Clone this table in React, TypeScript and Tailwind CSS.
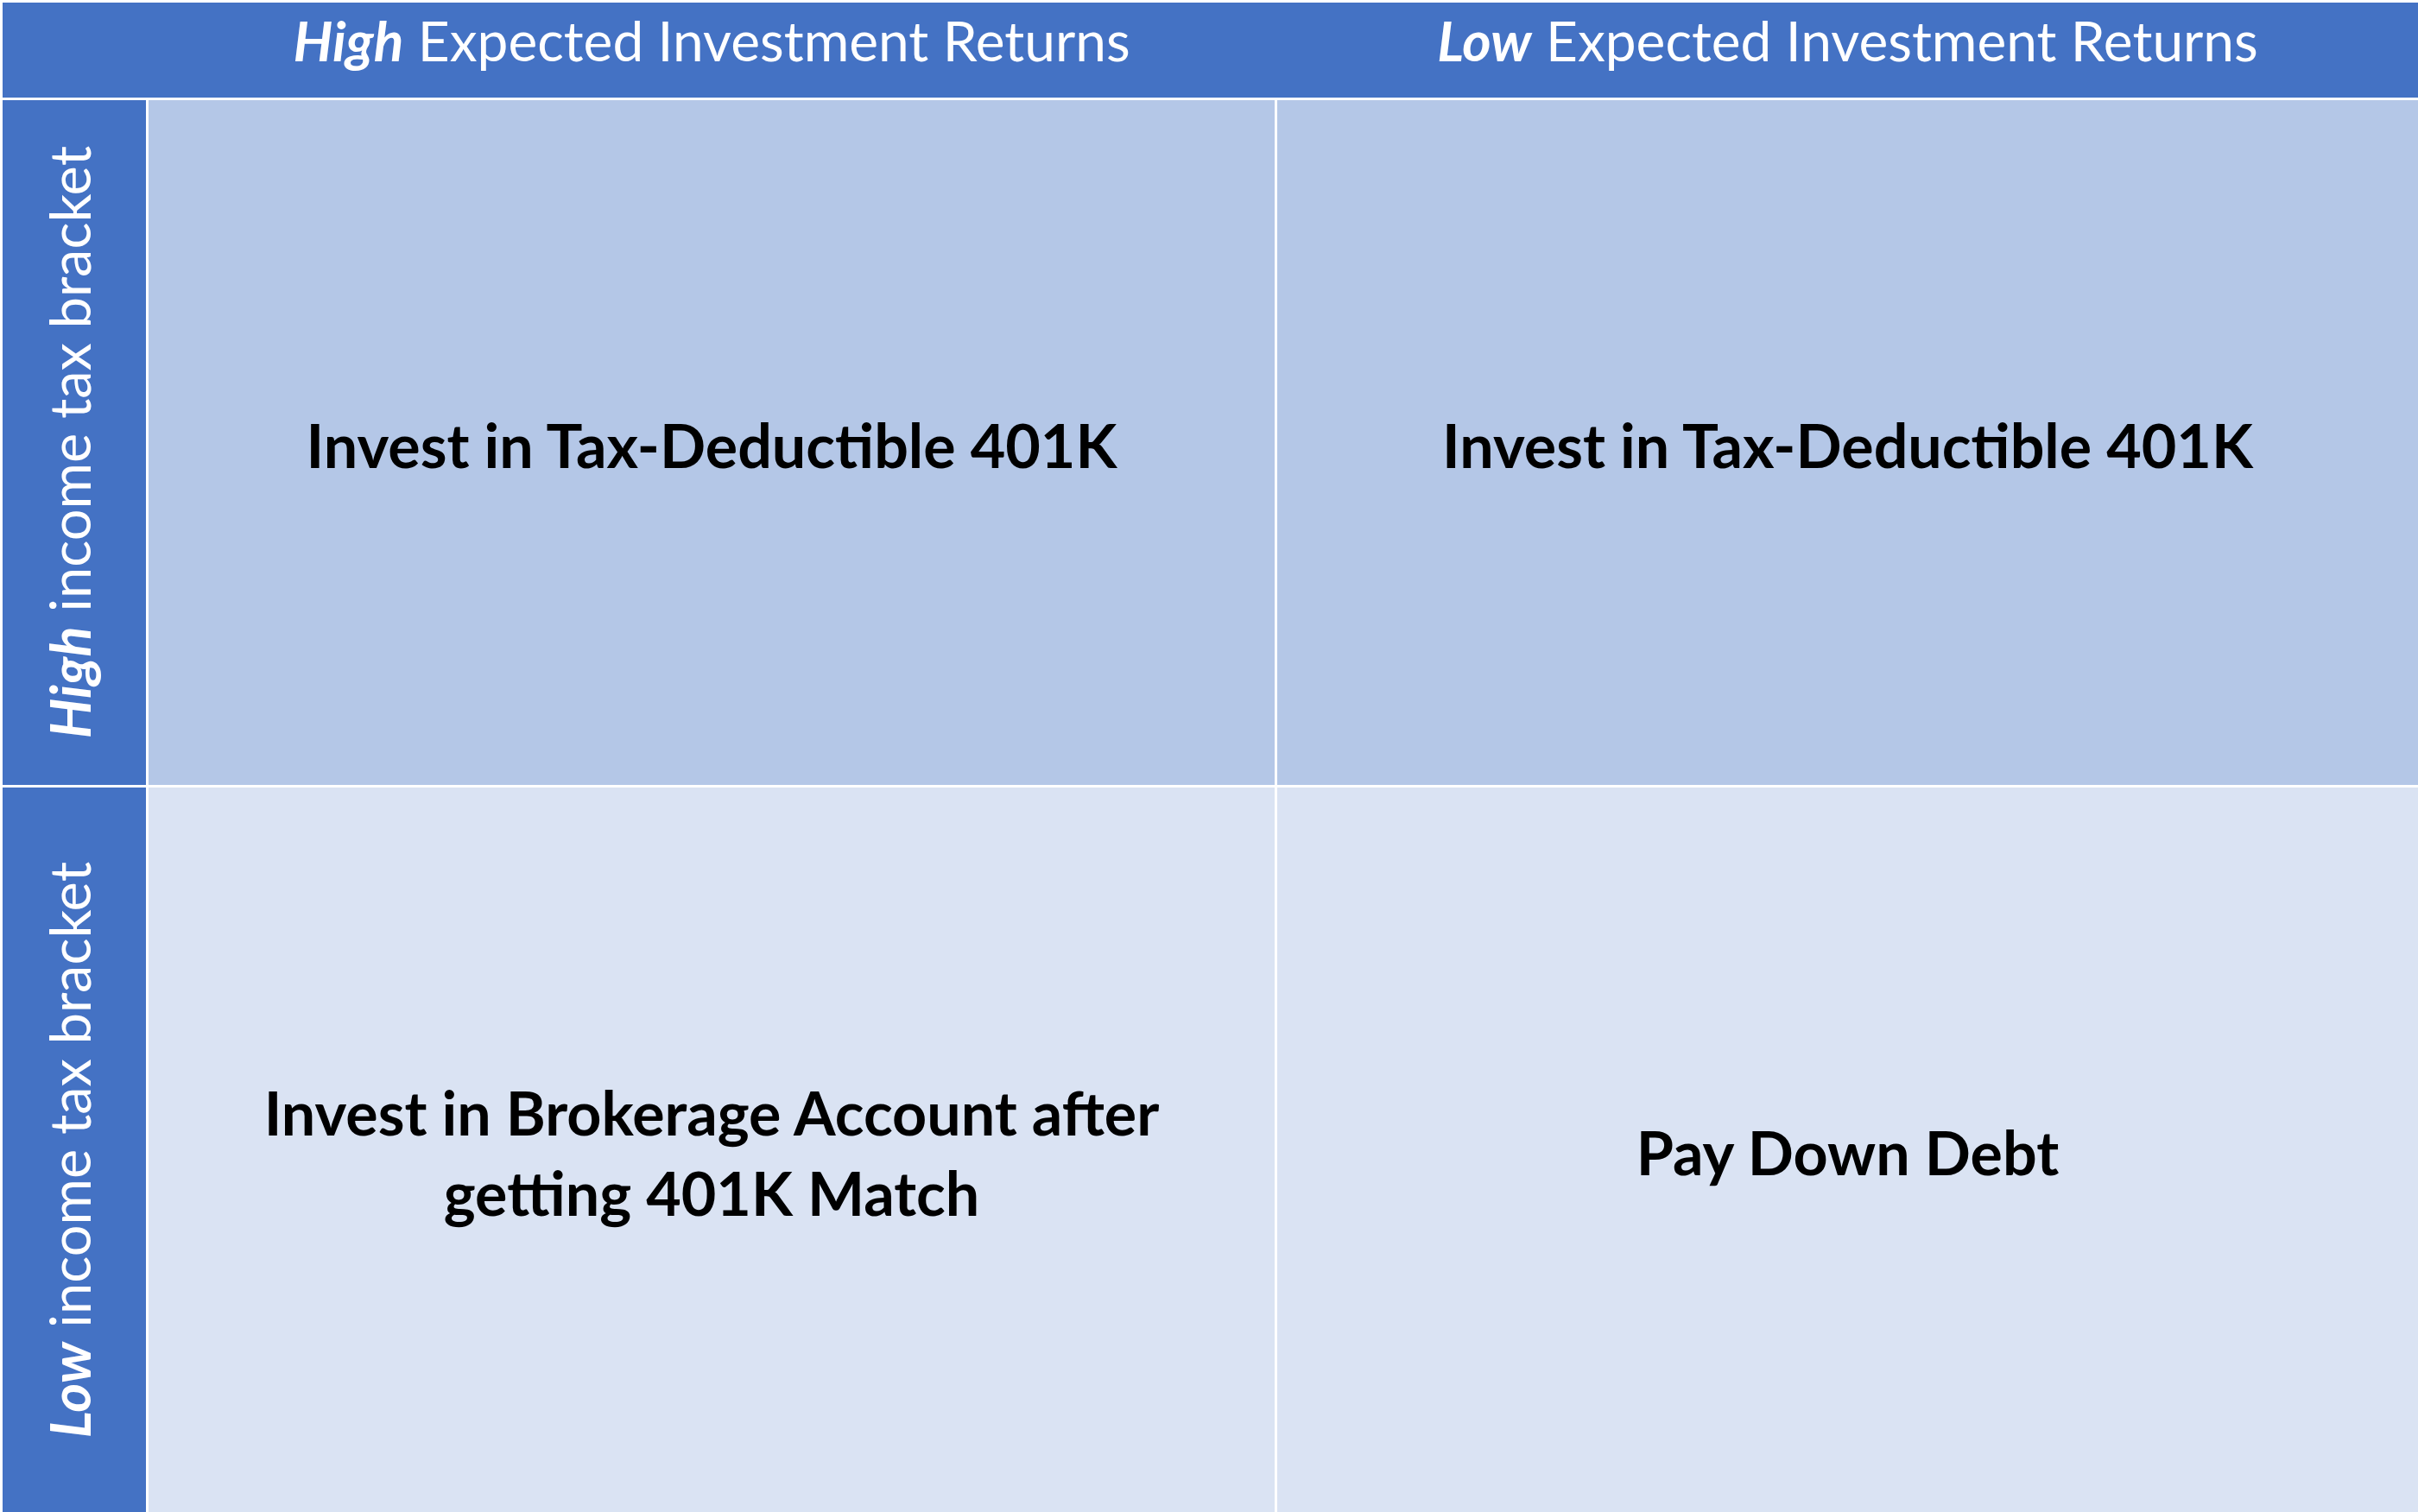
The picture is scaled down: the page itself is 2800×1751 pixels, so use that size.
const cols = "grid grid-cols-[166px_1304px_1321px] gap-x-[3px]";

const SideLabel = ({ strong, rest }: { strong: string; rest: string }) => (
  <div className="bg-[#4472C4] flex items-center justify-center pr-[12px]">
    <span className="[writing-mode:vertical-rl] rotate-180 text-white text-[65px] leading-none whitespace-nowrap">
      <span className="font-bold italic">{strong}</span> {rest}
    </span>
  </div>
);

const Cell = ({ tone, children }: { tone: string; children: React.ReactNode }) => (
  <div className={`${tone} flex items-center justify-center text-center`}>
    <p className="text-black font-bold text-[70px] leading-[93px] pt-[6px]">{children}</p>
  </div>
);

export default function App() {
  return (
    <div
      className="w-[2800px] h-[1751px] bg-white pt-[3px] pl-[3px] flex flex-col gap-y-[3px] overflow-hidden"
      style={{ fontFamily: "Lato, 'Open Sans', sans-serif" }}
    >
      {/* Column headers */}
      <div className={`${cols} bg-[#4472C4] h-[110px] items-center`}>
        <div />
        <div className="text-center text-white text-[64px] leading-none pb-[22px]">
          <span className="font-bold italic">High</span> Expected Investment Returns
        </div>
        <div className="text-center text-white text-[64px] leading-none pb-[22px]">
          <span className="font-bold italic">Low</span> Expected Investment Returns
        </div>
      </div>

      {/* Matrix */}
      <div className={`${cols} grid-rows-[793px_839px] gap-y-[3px]`}>
        <SideLabel strong="High" rest="income tax bracket" />
        <Cell tone="bg-[#B4C7E7]">Invest in Tax-Deductible 401K</Cell>
        <Cell tone="bg-[#B4C7E7]">Invest in Tax-Deductible 401K</Cell>

        <SideLabel strong="Low" rest="income tax bracket" />
        <Cell tone="bg-[#DAE3F3]">
          Invest in Brokerage Account after
          <br />
          getting 401K Match
        </Cell>
        <Cell tone="bg-[#DAE3F3]">Pay Down Debt</Cell>
      </div>
    </div>
  );
}
